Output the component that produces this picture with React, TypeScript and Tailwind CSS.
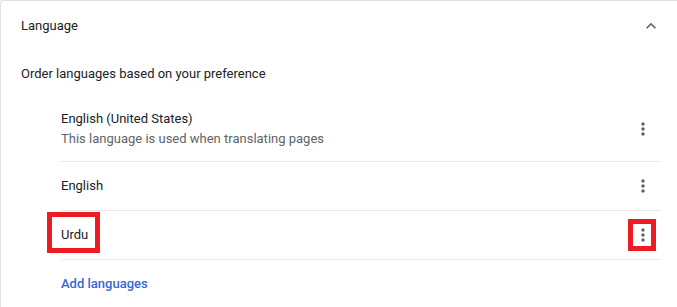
import React from "react";

const languages = [
  { name: "English (United States)", note: "This language is used when translating pages" },
  { name: "English" },
  { name: "Urdu", marked: true },
];

function MoreVert() {
  return (
    <svg viewBox="0 0 24 24" className="h-5 w-5 fill-[#5f6368]" aria-hidden>
      <path d="M12 8c1.1 0 2-.9 2-2s-.9-2-2-2-2 .9-2 2 .9 2 2 2zm0 2c-1.1 0-2 .9-2 2s.9 2 2 2 2-.9 2-2-.9-2-2-2zm0 6c-1.1 0-2 .9-2 2s.9 2 2 2 2-.9 2-2-.9-2-2-2z" />
    </svg>
  );
}

function ExpandLess() {
  return (
    <svg viewBox="0 0 24 24" className="h-5 w-5 fill-[#5f6368]" aria-hidden>
      <path d="M12 8l-6 6 1.41 1.41L12 10.83l4.59 4.58L18 14z" />
    </svg>
  );
}

export default function App() {
  return (
    <div className="h-[307px] w-[677px] overflow-hidden bg-white font-['Roboto',sans-serif] text-[13px] text-[#202124]">
      <div className="h-full rounded-tl-[4px] border-l border-t border-[#e0e0e0]">
        {/* section header */}
        <div className="flex h-[49px] items-center justify-between pl-5 pr-4">
          <span>Language</span>
          <ExpandLess />
        </div>

        <div className="flex h-[47px] items-center pl-5">Order languages based on your preference</div>

        <div className="pl-[60px] pr-4">
          {languages.map((lang, i) => (
            <div
              key={lang.name}
              className={`relative flex items-center justify-between ${
                lang.note ? "h-16" : "h-12"
              } ${i > 0 ? "h-[49px] border-t border-[#e8e8e8]" : ""}`}
            >
              {lang.marked && (
                <div className="pointer-events-none absolute left-[-14px] top-[1px] h-[41px] w-[53px] border-[5px] border-[#ed1c24]" />
              )}
              <div className="flex flex-col leading-5">
                <span>{lang.name}</span>
                {lang.note && <span className="text-[#5f6368]">{lang.note}</span>}
              </div>
              <button className="relative flex h-9 w-9 items-center justify-center">
                <MoreVert />
                {lang.marked && (
                  <div className="pointer-events-none absolute left-[3px] top-[2px] h-[32px] w-[28px] border-[5px] border-[#ed1c24]" />
                )}
              </button>
            </div>
          ))}
          <div className="flex h-[49px] items-center border-t border-[#e8e8e8]">
            <span className="font-medium text-[#3367d6]">Add languages</span>
          </div>
        </div>
      </div>
    </div>
  );
}
